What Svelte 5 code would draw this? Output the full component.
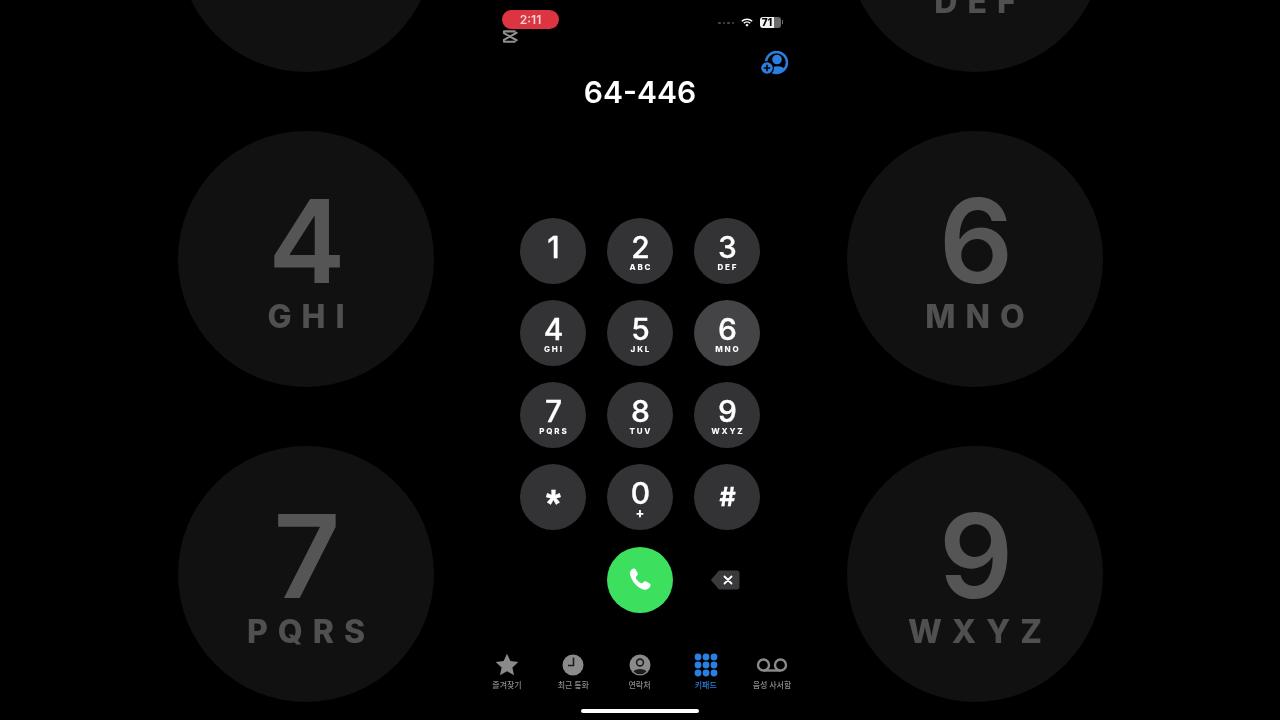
<script>
  const keys = [
    { digit: '1', letters: '' },
    { digit: '2', letters: 'ABC' },
    { digit: '3', letters: 'DEF' },
    { digit: '4', letters: 'GHI' },
    { digit: '5', letters: 'JKL' },
    { digit: '6', letters: 'MNO', pressed: true },
    { digit: '7', letters: 'PQRS' },
    { digit: '8', letters: 'TUV' },
    { digit: '9', letters: 'WXYZ' },
    { digit: '*', letters: '', symbol: 'star' },
    { digit: '0', letters: '+', zero: true },
    { digit: '#', letters: '', symbol: 'hash' }
  ];

  const leftKeys = [keys[0], keys[3], keys[6]];
  const rightKeys = [keys[2], keys[5], keys[8]];
</script>

{#snippet backdrop(list)}
  <div class="backdrop">
    {#each list as key}
      <div class="big-key">
        <span class="big-digit">{key.digit}</span>
        <span class="big-letters">{key.letters}</span>
      </div>
    {/each}
  </div>
{/snippet}

<div class="page">
  {@render backdrop(leftKeys)}

  <main class="phone">
    <div class="status">
      <div class="status-left">
        <span class="pill">2:11</span>
        <svg class="capcut" viewBox="0 0 20 16" width="20" height="16">
          <path d="M2.500 2.500H14M2.500 13.500H14M2.500 2.500V4.500L16 12M2.500 13.500V11.500L16 4" fill="none" stroke="#8f8f8f" stroke-width="2.200" stroke-linecap="round" stroke-linejoin="round" />
        </svg>
      </div>
      <div class="status-right">
        <span class="signal"><i></i><i></i><i></i><i></i></span>
        <svg viewBox="0 0 12 9" width="12" height="9">
          <path d="M.8 3.200a7.600 7.600 0 0 1 10.400 0" fill="none" stroke="#fff" stroke-width="1.500" />
          <path d="M2.800 5.200a4.600 4.600 0 0 1 6.400 0" fill="none" stroke="#fff" stroke-width="1.500" />
          <path d="M4.400 6.900 6 5.800l1.600 1.100L6 8.800z" fill="#fff" />
        </svg>
        <div class="battery">
          <span class="level">71</span>
          <span class="empty"></span>
          <span class="nub"></span>
        </div>
      </div>
    </div>

    <div class="add-row">
      <svg viewBox="0 0 28 24" width="28" height="24">
        <circle cx="15.500" cy="11.500" r="10.500" fill="none" stroke="#2a7fe0" stroke-width="2.400" />
        <circle cx="16" cy="8.500" r="4.800" fill="#2a7fe0" />
        <path d="M9 18.500c2-4.500 13-4.500 15 0a10.500 10.500 0 0 1-15 0z" fill="#2a7fe0" />
        <circle cx="6" cy="17" r="7" fill="#000" />
        <circle cx="6" cy="17" r="5.800" fill="#2a7fe0" />
        <path d="M2.800 17h6.400M6 13.800v6.400" stroke="#000" stroke-width="1.500" />
      </svg>
    </div>

    <div class="number">64-446</div>

    <div class="pad">
      {#each keys as key}
        <button class="key {key.symbol ?? ''}" class:pressed={key.pressed} class:zero={key.zero}>
          <span class="digit">{key.digit}</span>
          {#if key.letters}<span class="letters">{key.letters}</span>{/if}
        </button>
      {/each}

      <span></span>
      <button class="call" aria-label="call">
        <svg viewBox="0 0 24 24" width="30" height="30">
          <path d="M6.300 3c.8-.5 1.700-.3 2.200.5l1.600 2.800c.4.700.2 1.400-.3 1.900L8.900 9.300c-.3.300-.3.600-.2 1 .9 1.900 2.300 3.300 4.200 4.300.4.200.7.100 1-.2l1.100-1c.5-.5 1.300-.6 1.900-.3l2.800 1.700c.8.500 1 1.400.5 2.200-1 1.800-2.800 3.300-4.800 2.800C10.100 18.400 5.500 13.400 4 7.500 3.500 5.600 4.500 4 6.300 3z" fill="#fff" />
        </svg>
      </button>
      <button class="erase" aria-label="delete">
        <svg viewBox="0 0 30 20" width="30" height="20">
          <path d="M9 .5h18a2.500 2.500 0 0 1 2.500 2.500v14a2.500 2.500 0 0 1-2.500 2.500H9L.8 10z" fill="#3a3a3c" />
          <path d="M14.500 6.500l7 7M21.500 6.500l-7 7" stroke="#fff" stroke-width="1.800" stroke-linecap="round" />
        </svg>
      </button>
    </div>

    <nav class="tabs">
      <div class="tab">
        <svg viewBox="0 0 24 24" width="24" height="24">
          <path d="M12 .8l3.400 7.300 7.900.9-5.900 5.400 1.600 7.900-7-4-7 4 1.600-7.900L.7 9l7.900-.9z" fill="#8a8a8a" />
        </svg>
        <span>즐겨찾기</span>
      </div>
      <div class="tab">
        <svg viewBox="0 0 24 24" width="24" height="24">
          <circle cx="12" cy="12" r="10.500" fill="#8a8a8a" />
          <path d="M12.500 4.500v8H7" fill="none" stroke="#1c1c1c" stroke-width="1.600" />
        </svg>
        <span>최근 통화</span>
      </div>
      <div class="tab">
        <svg viewBox="0 0 24 24" width="24" height="24">
          <circle cx="12" cy="12" r="10.500" fill="#8a8a8a" />
          <circle cx="12" cy="9.500" r="3.400" fill="#8a8a8a" stroke="#1c1c1c" stroke-width="1.600" />
          <path d="M5.500 18.500c1.500-3.500 11.500-3.500 13 0a9 9 0 0 1-13 0z" fill="#1c1c1c" />
        </svg>
        <span>연락처</span>
      </div>
      <div class="tab active">
        <svg viewBox="0 0 24 24" width="24" height="24">
          {#each [4, 12, 20] as cy}
            {#each [4, 12, 20] as cx}
              <circle {cx} {cy} r="3.400" fill="#2a7fe0" />
            {/each}
          {/each}
        </svg>
        <span>키패드</span>
      </div>
      <div class="tab">
        <svg viewBox="0 0 32 24" width="32" height="24">
          <circle cx="7.500" cy="12" r="5.500" fill="none" stroke="#8a8a8a" stroke-width="2.400" />
          <circle cx="24.500" cy="12" r="5.500" fill="none" stroke="#8a8a8a" stroke-width="2.400" />
          <path d="M7.500 17.500h17" stroke="#8a8a8a" stroke-width="2.400" />
        </svg>
        <span>음성 사서함</span>
      </div>
    </nav>

    <div class="home"></div>
  </main>

  {@render backdrop(rightKeys)}
</div>

<style>
  :global(body) {
    background: #000;
  }

  .page {
    width: 1280px;
    height: 720px;
    display: flex;
    padding-left: 178px;
    box-sizing: border-box;
    overflow: hidden;
    background: #000;
    font-family: Inter, "Liberation Sans", sans-serif;
    color: #fff;
  }

  button {
    border: 0;
    padding: 0;
    font-family: inherit;
    color: inherit;
    background: none;
  }

  /* blown-up keys on either side of the video */
  .backdrop {
    width: 256px;
    flex: none;
    margin-top: -184px;
    display: flex;
    flex-direction: column;
    gap: 59px;
    filter: blur(0.7px);
  }

  .big-key {
    width: 256px;
    height: 256px;
    flex: none;
    border-radius: 50%;
    background: #111112;
    display: flex;
    flex-direction: column;
    align-items: center;
    padding-top: 50px;
    box-sizing: border-box;
  }

  .big-digit {
    height: 120px;
    line-height: 120px;
    font-size: 116px;
    font-weight: 600;
    color: #555;
    margin-left: 2px;
  }

  .big-letters {
    height: 34px;
    line-height: 34px;
    margin-top: -1px;
    font-size: 32px;
    font-weight: 800;
    letter-spacing: 10px;
    margin-right: -10px;
    color: #505050;
  }

  .phone {
    width: 413px;
    flex: none;
    height: 720px;
    display: flex;
    flex-direction: column;
    align-items: center;
    filter: blur(0.3px);
  }

  .status {
    align-self: stretch;
    height: 44px;
    padding: 10px 64px 0 68px;
    box-sizing: border-box;
    display: flex;
    justify-content: space-between;
    flex: none;
  }

  .status-left {
    display: flex;
    flex-direction: column;
    align-items: flex-start;
  }

  .pill {
    width: 57px;
    height: 19px;
    line-height: 19px;
    border-radius: 10px;
    background: #dc3440;
    text-align: center;
    font-size: 12px;
    font-weight: 600;
    color: #f4d6d8;
  }

  .capcut {
    margin-left: -1px;
  }

  .status-right {
    display: flex;
    align-items: center;
    height: 24px;
    gap: 7px;
  }

  .signal {
    display: flex;
    gap: 2px;
    margin-top: 2px;
  }

  .signal i {
    width: 2.500px;
    height: 2.500px;
    border-radius: 50%;
    background: #4a4a4a;
  }

  .battery {
    width: 23px;
    height: 11px;
    display: flex;
    align-items: center;
  }

  .level {
    width: 14px;
    height: 11px;
    background: #f2f2f2;
    border-radius: 3px 0 0 3px;
    color: #000;
    font-size: 10px;
    font-weight: 800;
    line-height: 11px;
    text-align: center;
  }

  .empty {
    width: 7px;
    height: 11px;
    background: #6a6a6a;
    border-radius: 0 3px 3px 0;
  }

  .nub {
    width: 1.500px;
    height: 4px;
    margin-left: 0.500px;
    background: #6a6a6a;
  }

  .add-row {
    align-self: stretch;
    height: 24px;
    margin-top: 7px;
    padding-right: 58px;
    display: flex;
    justify-content: flex-end;
    flex: none;
  }

  .number {
    height: 36px;
    line-height: 36px;
    margin-top: -1px;
    font-size: 30px;
    font-weight: 600;
    margin-right: 1px;
    flex: none;
  }

  .pad {
    margin-top: 108px;
    margin-right: 1px;
    display: grid;
    grid-template-columns: repeat(3, 66px);
    column-gap: 21px;
    row-gap: 16px;
    flex: none;
    justify-items: center;
    align-items: center;
  }

  .key {
    width: 66px;
    height: 66px;
    border-radius: 50%;
    background: #333335;
    display: flex;
    flex-direction: column;
    align-items: center;
    padding-top: 13px;
    box-sizing: border-box;
  }

  .key.pressed {
    background: #444446;
  }

  .digit {
    height: 32px;
    line-height: 32px;
    font-size: 30px;
    font-weight: 500;
    margin-left: 1px;
    -webkit-text-stroke: 0.3px #fff;
  }

  .letters {
    height: 9px;
    line-height: 9px;
    font-size: 8px;
    font-weight: 800;
    letter-spacing: 1.800px;
    margin-right: -1.800px;
  }

  .key.star {
    padding-top: 24px;
  }

  .key.star .digit {
    font-family: "Liberation Sans", sans-serif;
    font-size: 38px;
    font-weight: 700;
  }

  .key.hash {
    padding-top: 17px;
  }

  .key.hash .digit {
    font-size: 25px;
    font-weight: 700;
  }

  .key.zero .letters {
    font-size: 13px;
  }

  .call {
    width: 66px;
    height: 66px;
    border-radius: 50%;
    background: #3de05e;
    display: flex;
    align-items: center;
    justify-content: center;
    margin-top: 1px;
  }

  .erase {
    display: flex;
    margin-top: 1px;
    margin-left: -4px;
  }

  .tabs {
    width: 331.250px;
    margin-top: 40px;
    margin-right: 2px;
    display: grid;
    grid-template-columns: repeat(5, 66.250px);
    flex: none;
  }

  .tab {
    display: flex;
    flex-direction: column;
    align-items: center;
    gap: 2px;
    color: #8a8a8a;
    font-family: "Noto Sans CJK KR", sans-serif;
    font-size: 8px;
    font-weight: 500;
    line-height: 12px;
    white-space: nowrap;
  }

  .tab.active {
    color: #2a7fe0;
  }

  .home {
    width: 118px;
    height: 4px;
    border-radius: 2px;
    margin-top: 18px;
    margin-right: 2px;
    background: #fff;
    flex: none;
  }
</style>
